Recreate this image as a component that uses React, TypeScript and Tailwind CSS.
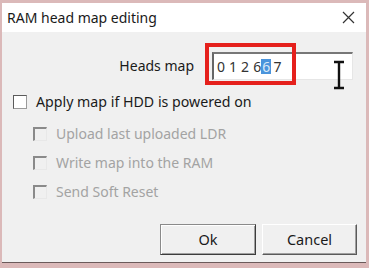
import React from "react";

function Check({ disabled }: { disabled?: boolean }) {
  if (disabled) {
    return (
      <div className="w-[14px] h-[14px] shrink-0 border-t-2 border-l-2 border-t-[#8a8a8a] border-l-[#8a8a8a] border-r border-b border-r-[#e8e8e8] border-b-[#e8e8e8] bg-[#f0f0f0]" />
    );
  }
  return (
    <div className="w-[14px] h-[14px] shrink-0 border border-[#5a5a5a] border-r-[#9a9a9a] border-b-[#9a9a9a] bg-white" />
  );
}

export default function App() {
  const font = { fontFamily: '"Noto Sans", "Open Sans", sans-serif' };
  return (
    <div
      className="w-[369px] h-[268px] bg-[#dbb9b9] pt-[3px] pl-[2px] pr-[3px] pb-[5px] flex flex-col overflow-hidden"
      style={font}
    >
      <div className="flex-1 flex flex-col border-b border-[#6b5a5a]">
        <div className="h-[29px] bg-white flex items-center justify-between pl-[5px] pr-[10px] shrink-0">
          <span className="text-[14px] text-[#1a1a1a] leading-none">RAM head map editing</span>
          <svg width="13" height="13" viewBox="0 0 13 13" className="mr-[1px]">
            <path d="M1 1 L12 12 M12 1 L1 12" stroke="#333" strokeWidth="1.2" />
          </svg>
        </div>
        <div className="flex-1 bg-[#f0f0f0] relative flex flex-col">
          <div className="mt-[20px] flex items-center h-[28px]">
            <span className="w-[192px] text-right text-[14px] text-[#1a1a1a] leading-none">Heads map</span>
            <div className="ml-[18px] w-[141px] h-[28px] bg-white border-t-2 border-l-2 border-t-[#777] border-l-[#666] border-r border-b border-r-[#e6e6e6] border-b-[#e6e6e6] flex items-center pl-[3px] text-[14px] text-[#333] leading-none">
              <span className="tracking-[0.2px]">0 1 2 6 </span>
              <span className="bg-[#4a94dc] text-[#dbeaf8] px-[1px] h-[15px] flex items-center">6</span>
              <span className="ml-[2px]">7</span>
            </div>
          </div>
          <div className="absolute left-[203px] top-[11px] w-[91px] h-[42px] border-4 border-[#e5201c]" />
          <svg className="absolute left-[330px] top-[28px]" width="14" height="30" viewBox="0 0 14 30">
            <path d="M2 2 H12 M7 2 V28 M2 28 H12" stroke="#111" strokeWidth="2.4" fill="none" />
          </svg>
          <div className="mt-[15px] flex items-center h-[14px] pl-[11px] gap-[9px]">
            <Check />
            <span className="text-[14.2px] text-[#1a1a1a] leading-none">Apply map if HDD is powered on</span>
          </div>
          <div className="mt-[10px] flex flex-col">
            {["Upload last uploaded LDR", "Write map into the RAM", "Send Soft Reset"].map((t) => (
              <div key={t} className="h-[29px] flex items-center pl-[31px] gap-[9px]">
                <Check disabled />
                <span className="text-[14px] text-[#a3a3a3] leading-none">{t}</span>
              </div>
            ))}
          </div>
          <div className="flex-1" />
          <div className="flex justify-end gap-[6px] pr-[9px] mb-[7px]">
            <div className="w-[96px] h-[31px] flex items-center justify-center border border-[#8a8a8a] border-r-[#3c3c3c] border-b-[#3c3c3c] bg-[#f0f0f0] text-[14.5px] text-[#1a1a1a] leading-none shadow-[inset_1px_1px_0_#ffffff,inset_-1px_-1px_0_#a0a0a0]">
              Ok
            </div>
            <div className="w-[95px] h-[31px] flex items-center justify-center border border-[#ffffff] border-r-[#5a5a5a] border-b-[#5a5a5a] bg-[#f0f0f0] text-[14.5px] text-[#1a1a1a] leading-none shadow-[inset_-1px_-1px_0_#a0a0a0]">
              Cancel
            </div>
          </div>
        </div>
      </div>
    </div>
  );
}
